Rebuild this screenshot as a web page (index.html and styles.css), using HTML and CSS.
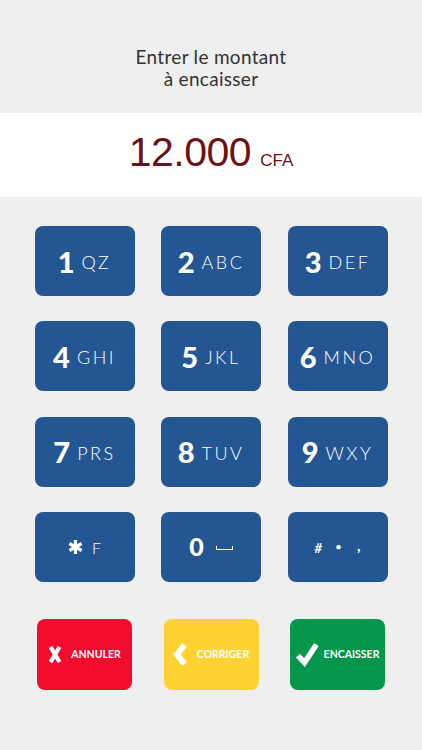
FILE: index.html
```html
<!DOCTYPE html>
<html lang="fr">
<head>
  <meta charset="UTF-8" />
  <meta name="viewport" content="width=device-width, initial-scale=1.0"/>
  <title>Encaisser</title>
  <link rel="stylesheet" href="styles.css">
</head>
<body>
  <div class="prompt">Entrer le montant<br>à encaisser</div>

  <div class="amount">
    <span class="value">12.000</span>
    <span class="currency">CFA</span>
  </div>

  <div class="keypad">
    <button class="key"><span class="digit">1</span><span class="letters">QZ</span></button>
    <button class="key"><span class="digit">2</span><span class="letters">ABC</span></button>
    <button class="key"><span class="digit">3</span><span class="letters">DEF</span></button>
    <button class="key"><span class="digit">4</span><span class="letters">GHI</span></button>
    <button class="key"><span class="digit">5</span><span class="letters">JKL</span></button>
    <button class="key"><span class="digit">6</span><span class="letters">MNO</span></button>
    <button class="key"><span class="digit">7</span><span class="letters">PRS</span></button>
    <button class="key"><span class="digit">8</span><span class="letters">TUV</span></button>
    <button class="key"><span class="digit">9</span><span class="letters">WXY</span></button>
    <button class="key">
      <svg class="star" width="15" height="14" viewBox="0 0 15 14">
        <g stroke="#fff" stroke-width="3.2">
          <line x1="7.5" y1="0" x2="7.5" y2="14"/>
          <line x1="1.4" y1="3.5" x2="13.6" y2="10.5"/>
          <line x1="1.4" y1="10.5" x2="13.6" y2="3.5"/>
        </g>
      </svg>
      <span class="small-letter">F</span>
    </button>
    <button class="key"><span class="digit zero">0</span><span class="space-mark"></span></button>
    <button class="key"><span class="hash">#</span><span class="dot">•</span><span class="comma">,</span></button>
  </div>

  <div class="actions">
    <button class="action cancel">
      <svg width="14" height="17" viewBox="0 0 14 17">
        <path d="M2.5 1 L11.5 16 M11.5 1 L2.5 16" stroke="#fff" stroke-width="4.2" fill="none"/>
      </svg>
      ANNULER
    </button>
    <button class="action fix">
      <svg width="14" height="23" viewBox="0 0 14 23">
        <polyline points="11.5,2 4,11.5 11.5,21" stroke="#fff" stroke-width="6" fill="none" stroke-linejoin="miter"/>
      </svg>
      CORRIGER
    </button>
    <button class="action cash">
      <svg width="23" height="25" viewBox="0 0 23 25">
        <polyline points="2,13.5 8.5,20.5 20.5,2.5" stroke="#fff" stroke-width="5.5" fill="none" stroke-linejoin="miter"/>
      </svg>
      ENCAISSER
    </button>
  </div>
</body>
</html>
```

FILE: styles.css
```css
body {
  font-family: Lato, "Open Sans", sans-serif;
  background-color: #efefef;
  margin: 0;
  padding: 0;
}
.prompt {
  height: 113px;
  box-sizing: border-box;
  padding-top: 46px;
  text-align: center;
  font-size: 19px;
  line-height: 22px;
  letter-spacing: 0.3px;
  color: #333;
}
.amount {
  height: 84px;
  background-color: #fff;
  display: flex;
  justify-content: center;
  align-items: baseline;
  color: #6b1216;
  font-family: "Liberation Sans", Arial, sans-serif;
}
.value {
  font-size: 41px;
  line-height: 78px;
  letter-spacing: -0.5px;
}
.currency {
  font-size: 17px;
  margin-left: 9px;
}
button {
  border: none;
  padding: 0;
  cursor: pointer;
  font-family: Lato, "Open Sans", sans-serif;
  color: #fff;
}
.keypad {
  display: grid;
  grid-template-columns: repeat(3, 100px);
  grid-auto-rows: 70px;
  column-gap: 26.5px;
  row-gap: 25.3px;
  justify-content: center;
  margin-top: 29px;
}
.key {
  background-color: #255694;
  border-radius: 8px;
  display: flex;
  align-items: center;
  justify-content: center;
}
.digit {
  font-size: 29px;
  font-weight: 900;
  line-height: 1;
}
.letters {
  font-size: 18px;
  font-weight: 300;
  letter-spacing: 2.5px;
  margin-left: 7px;
  line-height: 1;
  padding-top: 2px;
}
.star {
  margin-right: 9px;
}
.small-letter {
  font-size: 16px;
  font-weight: 300;
  padding-top: 1px;
}
.digit.zero {
  font-size: 25px;
}
.space-mark {
  width: 15px;
  height: 3px;
  border: 1.5px solid #fff;
  border-top: none;
  margin-left: 12px;
  margin-top: 3px;
}
.hash {
  font-size: 13px;
  font-weight: 700;
  font-style: italic;
  padding-top: 3px;
}
.dot {
  font-size: 12px;
  margin-left: 13px;
}
.comma {
  font-size: 15px;
  font-weight: 700;
  margin-left: 15px;
  padding-bottom: 4px;
}
.actions {
  display: grid;
  grid-template-columns: repeat(3, 95px);
  grid-auto-rows: 71px;
  column-gap: 31.5px;
  justify-content: center;
  margin-top: 37px;
}
.action {
  border-radius: 8px;
  display: flex;
  align-items: center;
  justify-content: center;
  font-size: 10.5px;
  font-weight: 700;
  gap: 10px;
}
.cancel {
  background-color: #f20d2e;
  gap: 9px;
}
.fix {
  background-color: #fed232;
}
.cash {
  background-color: #04964a;
  gap: 5px;
}
```
